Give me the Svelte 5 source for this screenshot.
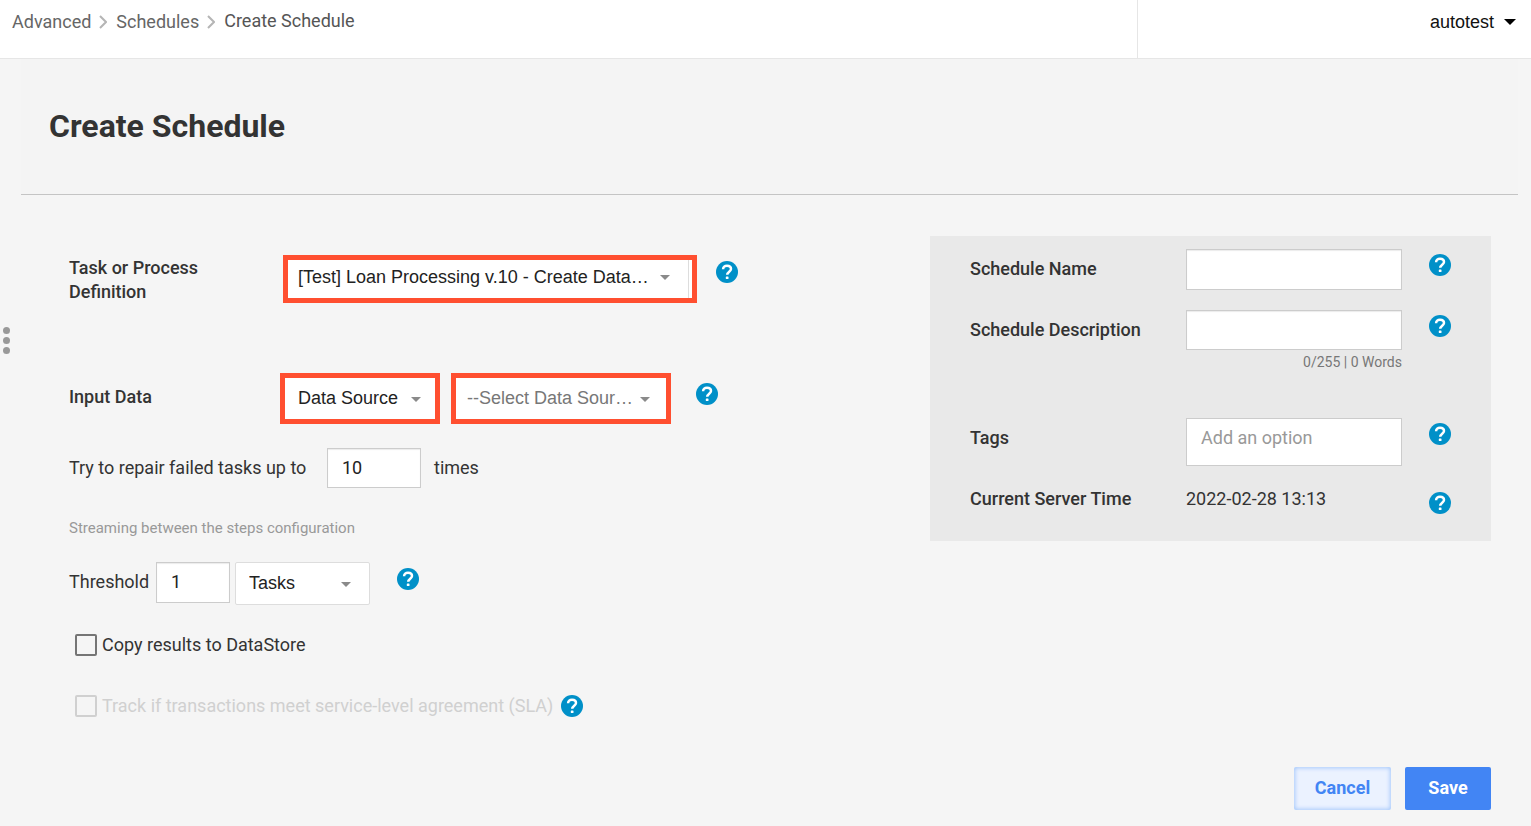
<script>
  let definition = "loan"
  let inputType = "source"
  let dataSource = ""
  let repairCount = "10"
  let threshold = "1"
  let unit = "tasks"
  let copyResults = false
  let trackSla = false
  let name = ""
  let description = ""
  let tags = ""

  $: words = description.split(" ").filter((w) => w).length
</script>

{#snippet help(topic)}
  <button type="button" class="help" aria-label="Help: {topic}">
    <svg viewBox="0 0 22 22" width="22" height="22">
      <circle cx="11" cy="11" r="11" fill="#0090c8" />
      <path d="M7.1 8.3c0-2.2 1.6-3.6 3.9-3.6s4 1.3 4 3.3c0 2.6-3.8 2.8-3.8 5.8" fill="none" stroke="#fff" stroke-width="2.5" />
      <rect x="9.8" y="15.4" width="2.7" height="2.7" rx="0.7" fill="#fff" />
    </svg>
  </button>
{/snippet}

{#snippet caret()}
  <svg class="caret" viewBox="0 0 10 5" width="10" height="5"><path d="M0 0h10L5 5z" fill="currentColor" /></svg>
{/snippet}

{#snippet chevron()}
  <svg class="chevron" viewBox="0 0 8 14" width="8" height="14">
    <path d="M1 1l6 6-6 6" fill="none" stroke="#b5b5b5" stroke-width="2" />
  </svg>
{/snippet}

<header>
  <nav aria-label="Breadcrumb">
    <a href="#advanced">Advanced</a>
    {@render chevron()}
    <a href="#schedules">Schedules</a>
    {@render chevron()}
    <span class="current">Create Schedule</span>
  </nav>
  <div class="account">
    <button type="button" class="user">
      autotest
      <svg viewBox="0 0 12 6" width="12" height="6"><path d="M0 0h12L6 6z" fill="#000" /></svg>
    </button>
  </div>
</header>

<div class="page">
  <aside>
    <button type="button" class="handle" aria-label="Toggle menu"><i></i><i></i><i></i></button>
  </aside>

  <main>
    <div class="title"><h1>Create Schedule</h1></div>

    <form on:submit|preventDefault>
      <div class="columns">
        <section class="settings">
          <div class="row task">
            <label class="strong" for="definition">Task or Process Definition</label>
            <div class="select marked">
              <select id="definition" bind:value={definition}>
                <option value="loan">[Test] Loan Processing v.10 - Create Data…</option>
              </select>
              {@render caret()}
            </div>
            {@render help("definition")}
          </div>

          <div class="row data">
            <label class="strong" for="input-type">Input Data</label>
            <div class="select marked type">
              <select id="input-type" bind:value={inputType}>
                <option value="source">Data Source</option>
              </select>
              {@render caret()}
            </div>
            <div class="select marked source">
              <select aria-label="Data Source" bind:value={dataSource}>
                <option value="">--Select Data Sour…</option>
              </select>
              {@render caret()}
            </div>
            {@render help("input data")}
          </div>

          <div class="row repair">
            <label for="repair">Try to repair failed tasks up to</label>
            <input id="repair" type="text" bind:value={repairCount} />
            <span>times</span>
          </div>

          <p class="note">Streaming between the steps configuration</p>

          <div class="row threshold">
            <label for="threshold">Threshold</label>
            <input id="threshold" type="text" bind:value={threshold} />
            <div class="select unit">
              <select aria-label="Threshold unit" bind:value={unit}>
                <option value="tasks">Tasks</option>
              </select>
              {@render caret()}
            </div>
            {@render help("threshold")}
          </div>

          <div class="row check">
            <input id="copy" type="checkbox" bind:checked={copyResults} />
            <label for="copy">Copy results to DataStore</label>
          </div>

          <div class="row check sla">
            <input id="sla" type="checkbox" bind:checked={trackSla} disabled />
            <label for="sla">Track if transactions meet service-level agreement (SLA)</label>
            {@render help("SLA")}
          </div>
        </section>

        <section class="details">
          <div class="field">
            <label for="name">Schedule Name</label>
            <input id="name" type="text" bind:value={name} />
            {@render help("name")}
          </div>
          <div class="field description">
            <label for="description">Schedule Description</label>
            <div>
              <input id="description" type="text" maxlength="255" bind:value={description} />
              <p class="count">{description.length}/255 | {words} Words</p>
            </div>
            {@render help("description")}
          </div>
          <div class="field tags">
            <label for="tags">Tags</label>
            <input id="tags" type="text" placeholder="Add an option" bind:value={tags} />
            {@render help("tags")}
          </div>
          <div class="field time">
            <span class="term">Current Server Time</span>
            <time datetime="2022-02-28T13:13">2022-02-28 13:13</time>
            {@render help("server time")}
          </div>
        </section>
      </div>

      <div class="actions">
        <button type="button" class="cancel">Cancel</button>
        <button type="submit" class="save">Save</button>
      </div>
    </form>
  </main>
</div>

<style>
  :global(body) {
    background: #f5f5f5;
    color: #333;
    font: 18px/24px Roboto, sans-serif;
  }

  * {
    box-sizing: border-box;
  }

  h1, p {
    margin: 0;
  }

  button {
    padding: 0;
    border: 0;
    background: none;
    cursor: pointer;
  }

  svg {
    display: block;
  }

  header {
    display: flex;
    height: 59px;
    background: #fff;
    border-bottom: 1px solid #e6e6e6;
  }

  nav {
    flex: 1;
    display: flex;
    align-items: flex-start;
    padding: 10px 12px;
  }

  nav a {
    color: #666;
    text-decoration: none;
  }

  .current {
    color: #555;
    line-height: 22px;
  }

  .chevron {
    margin: 5px 9px 0 8px;
  }

  .account {
    width: 394px;
    padding: 10px 15px;
    border-left: 1px solid #e6e6e6;
  }

  .user {
    display: flex;
    align-items: center;
    gap: 10px;
    margin-left: auto;
    color: #111;
    font: 18px/24px "Liberation Sans", Arial, sans-serif;
  }

  .page {
    display: flex;
  }

  aside {
    width: 21px;
    padding: 268px 3px 0;
  }

  .handle {
    display: grid;
    gap: 3px;
  }

  .handle i {
    width: 7px;
    height: 7px;
    border-radius: 50%;
    background: #999;
  }

  main {
    flex: 1;
    padding-right: 13px;
  }

  .title {
    padding: 47px 28px 48px;
    background: #f4f4f4;
    border-bottom: 1px solid #c4c4c4;
  }

  h1 {
    font-size: 32px;
    line-height: 40px;
    font-weight: 700;
  }

  form {
    padding: 41px 27px 16px 48px;
  }

  .columns {
    display: grid;
    grid-template-columns: minmax(0, 1fr) minmax(480px, 561px);
    align-items: start;
  }

  .settings {
    padding-top: 18px;
  }

  .row {
    display: flex;
    align-items: center;
  }

  .strong, .details label, .term {
    font-weight: 500;
  }

  .help {
    flex: none;
    border-radius: 50%;
  }

  input[type="text"] {
    width: 100%;
    height: 41px;
    padding: 0 14px 2px;
    border: 1px solid #ccc;
    border-radius: 0;
    background: #fff;
    box-shadow: inset 0 1px 1px rgba(0, 0, 0, 0.08);
    color: #222;
    font: 18px/24px Roboto, sans-serif;
  }

  .select {
    position: relative;
    background: #fff;
  }

  .select select {
    appearance: none;
    width: 100%;
    height: 100%;
    padding: 0 28px 2px 13px;
    border: 0;
    background: transparent;
    color: #222;
    font: 18px/24px "Liberation Sans", Arial, sans-serif;
  }

  .caret {
    position: absolute;
    top: calc(50% - 2px);
    right: 18px;
    color: #8a8a8a;
    pointer-events: none;
  }

  .marked {
    border: 5px solid #ff4f30;
  }

  .task .strong {
    width: 214px;
    padding: 2px 60px 0 0;
  }

  .task .select {
    width: 414px;
    height: 48px;
    margin-right: 19px;
  }

  .task select {
    width: calc(100% - 3px);
    padding: 0 10px 4px;
    border-right: 1px solid #ddd;
  }

  .task .caret {
    top: calc(50% - 4px);
    right: 22px;
  }

  .task .help, .data .help, .threshold .help {
    align-self: flex-start;
    margin-top: 6px;
  }

  .data {
    margin-top: 69px;
  }

  .data .strong {
    width: 211px;
    padding-bottom: 4px;
  }

  .data .select {
    height: 51px;
  }

  .data select {
    padding: 0 11px 1px 13px;
  }

  .data .caret {
    right: 16px;
  }

  .data .type {
    width: 160px;
    margin-right: 11px;
  }

  .data .type .caret {
    right: 14px;
  }

  .data .source {
    width: 220px;
    margin-right: 25px;
  }

  .data .source select {
    padding-left: 11px;
    color: #777;
  }

  .task .help {
    margin-top: 7px;
  }

  .data .help {
    margin-top: 10px;
  }

  .repair {
    margin-top: 24px;
  }

  .repair label {
    width: 258px;
  }

  .repair input[type="text"] {
    width: 94px;
    height: 40px;
    margin-right: 13px;
  }

  .note {
    margin-top: 30px;
    color: #999;
    font-size: 15px;
    line-height: 20px;
  }

  .threshold {
    align-items: flex-start;
    margin-top: 24px;
  }

  .threshold label {
    width: 87px;
    padding-top: 8px;
  }

  .threshold input[type="text"] {
    width: 74px;
    margin-right: 5px;
  }

  .unit {
    width: 135px;
    height: 43px;
    margin-right: 27px;
    border: 1px solid #ddd;
    border-radius: 2px;
  }

  .check {
    height: 22px;
    margin: 29px 0 0 6px;
  }

  .check input {
    appearance: none;
    width: 22px;
    height: 22px;
    margin: 0 5px 0 0;
    border: 2px solid #757575;
    border-radius: 2px;
  }

  .check input:checked {
    background: #4285f4;
  }

  .sla {
    margin-top: 39px;
    color: #d0d0d0;
  }

  .sla input {
    border-color: #d0d0d0;
  }

  .sla .help {
    margin-left: 8px;
  }

  .details {
    padding: 13px 40px 16px;
    background: #e9e9e9;
  }

  .field {
    display: grid;
    grid-template-columns: 216px minmax(0, 1fr) 22px;
    align-items: start;
    margin-bottom: 20px;
  }

  .field label, .term, time {
    padding-top: 8px;
  }

  .field > :nth-child(2) {
    margin-right: 27px;
  }

  .field input[type="text"] {
    width: auto;
    min-width: 0;
  }

  .field .help {
    margin-top: 5px;
  }

  .field.description {
    margin-bottom: 44px;
  }

  .field.description input[type="text"] {
    display: block;
    width: 100%;
    height: 40px;
  }

  .count {
    color: #777;
    font-size: 14px;
    text-align: right;
  }

  .field.tags {
    margin-bottom: 13px;
  }

  .tags input[type="text"] {
    height: 48px;
    padding-bottom: 10px;
    box-shadow: none;
  }

  .tags input::placeholder {
    color: #999;
  }

  .field.time {
    min-height: 46px;
    margin-bottom: 0;
  }

  .time .help {
    margin-top: 13px;
  }

  .actions {
    display: flex;
    justify-content: flex-end;
    gap: 14px;
    margin-top: 50px;
  }

  .actions button {
    height: 43px;
    padding-bottom: 2px;
    border-radius: 2px;
    font: 700 18px/24px Roboto, sans-serif;
  }

  .cancel {
    width: 97px;
    background: #ebf2ff;
    box-shadow: inset 0 0 4px 1px #a5c8fb;
    color: #4285f4;
  }

  .save {
    width: 86px;
    background: #4285f4;
    color: #fff;
  }
</style>
